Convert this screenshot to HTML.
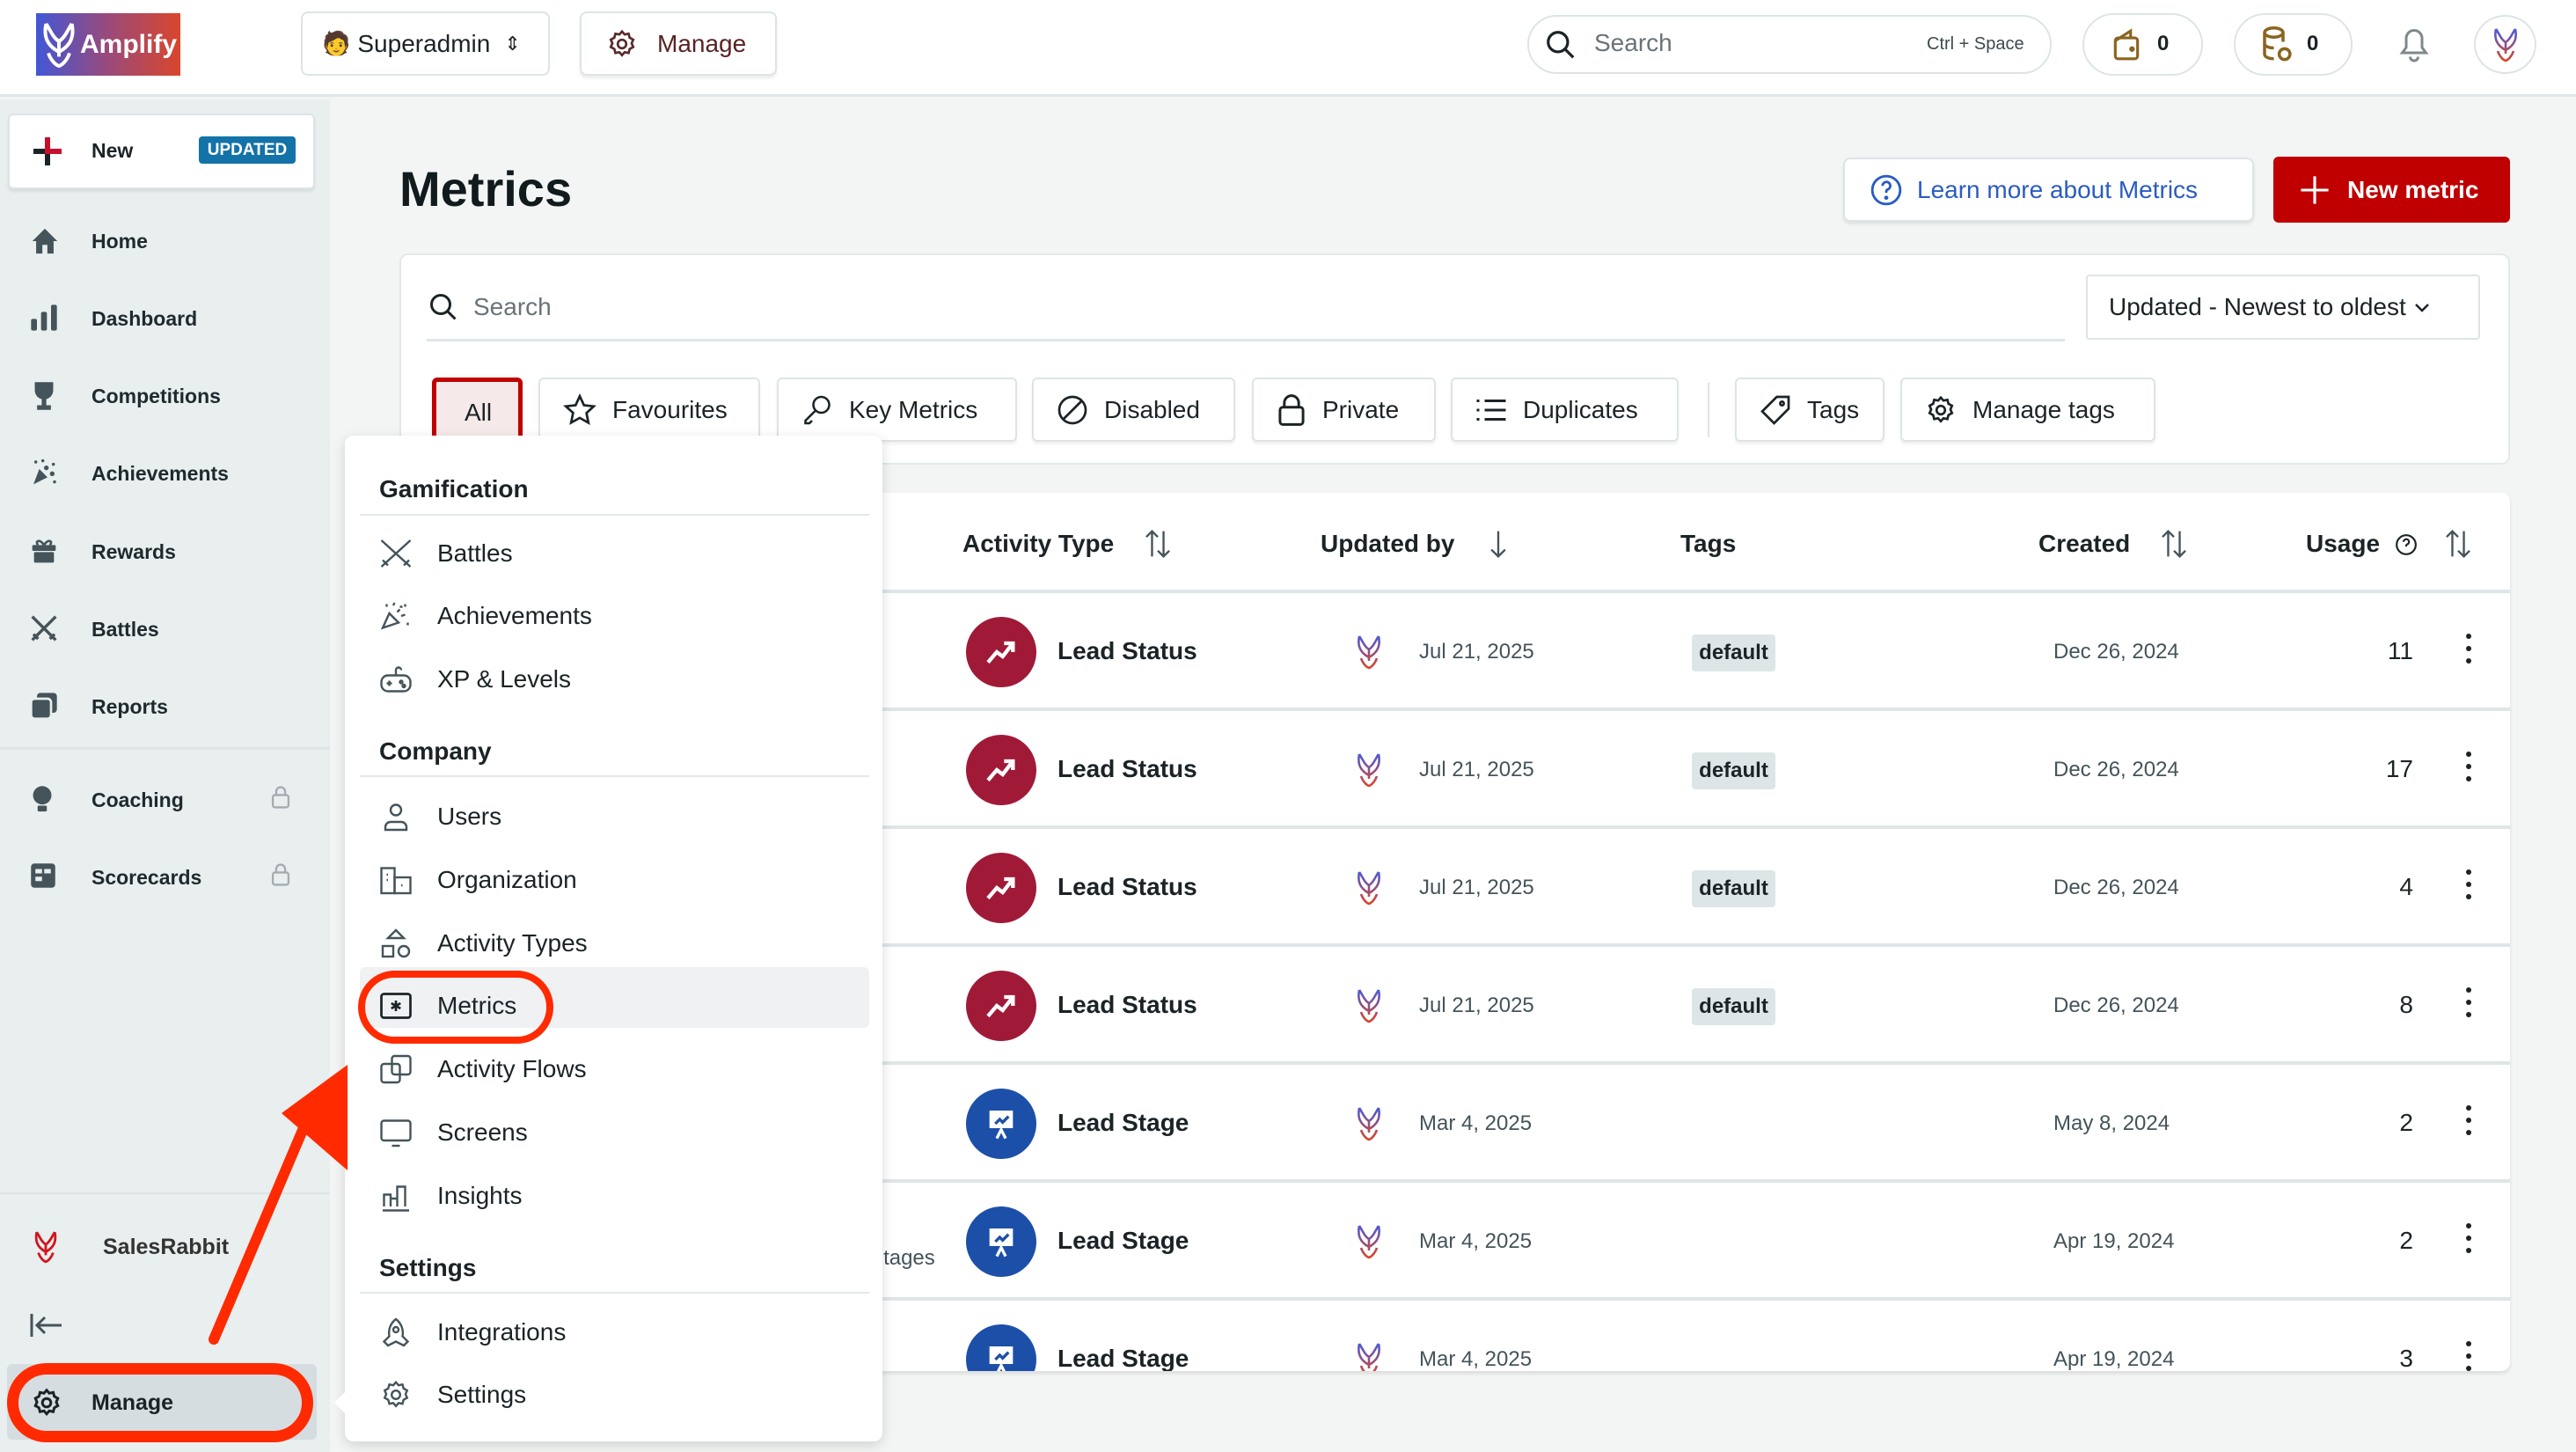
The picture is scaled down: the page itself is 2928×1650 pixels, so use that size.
<!DOCTYPE html>
<html><head><meta charset="utf-8"><style>
*{box-sizing:border-box;margin:0;padding:0}
body{width:2928px;height:1650px;overflow:hidden;background:#f3f5f4;font-family:"Liberation Sans",sans-serif;color:#1b2326;position:relative}
.a{position:absolute}
.btn{position:absolute;background:#fff;border:2px solid #dde4e6;border-radius:8px;box-shadow:0 3px 3px rgba(0,0,0,.08);display:flex;align-items:center;font-size:28px}
.nav{position:absolute;left:0;width:375px;height:60px;font-size:23px;font-weight:bold;color:#1f2a2e}
.nav svg{position:absolute;left:34px;top:13px}
.nav span{position:absolute;left:104px;top:17px}
.chip{position:absolute;top:429px;height:73px;background:#fff;border:2px solid #dde4e6;border-radius:6px;box-shadow:0 3px 3px rgba(0,0,0,.06);display:flex;align-items:center;font-size:28px;padding-left:26px;gap:18px}
.th{position:absolute;top:602px;font-size:28px;font-weight:bold;color:#1b2326}
.row{position:absolute;left:0;width:2399px;height:134px;border-top:4px solid #dfe6e7}
.ic{position:absolute;left:644px;top:27px;width:80px;height:80px;border-radius:50%;display:flex;align-items:center;justify-content:center}
.rt{position:absolute;top:50px;font-size:28px;white-space:nowrap}
.dt{position:absolute;top:53px;font-size:24px;color:#44545a;white-space:nowrap}
.tag{position:absolute;left:1469px;top:47px;width:95px;height:42px;background:#dde5e6;border-radius:4px;font-size:24px;font-weight:bold;display:flex;align-items:center;justify-content:center}
.num{position:absolute;top:50px;right:110px;font-size:28px}
.dots{position:absolute;left:2349px;top:46px}
.dots i{display:block;width:6px;height:6px;border-radius:50%;background:#1b2326;margin-bottom:8px}
.mi{position:absolute;left:0;width:611px;height:68px;font-size:28px;color:#1b2326}
.mi svg{position:absolute;left:40px;top:16px}
.mi span{position:absolute;left:105px;top:18px}
.mh{position:absolute;left:39px;font-size:28px;font-weight:bold}
.ml{position:absolute;left:17px;width:579px;height:2px;background:#e3e8e9}
</style></head><body>
<svg width="0" height="0" style="position:absolute"><defs><linearGradient id="g" x1="0" y1="0" x2="0" y2="1"><stop offset="0" stop-color="#4a5bd8"/><stop offset="1" stop-color="#d9462c"/></linearGradient><path id="rab" d="M4 2 C2 12 4 20 15 26 M26 2 C28 12 26 20 15 26 M4 2 C8 8 10 14 15 17 M26 2 C22 8 20 14 15 17 M15 17 V30 M6 27 C8 33 12 37 15 38 C18 37 22 33 24 27"/></defs></svg>

<div class="a" style="left:0;top:0;width:2928px;height:110px;background:#fff;border-bottom:3px solid #dfe6e7"></div>
<div class="a" style="left:41px;top:15px;width:164px;height:71px;background:linear-gradient(90deg,#4257d6,#9a4a7a,#d9462c);display:flex;align-items:center">
<svg width="40" height="56" viewBox="0 0 30 40" style="margin-left:6px"><use href="#rab" fill="none" stroke="#fff" stroke-width="3"/></svg>
<span style="color:#fff;font-weight:bold;font-size:30px;margin-left:4px">Amplify</span></div>
<div class="btn" style="left:342px;top:13px;width:283px;height:73px;box-shadow:none;padding-left:22px;gap:8px"><span style="font-size:26px">🧑</span><span>Superadmin</span><span style="font-size:22px;margin-left:8px">⇕</span></div>
<div class="btn" style="left:659px;top:13px;width:224px;height:73px;padding-left:28px;gap:22px;color:#5a2222"><svg width="36" height="36" viewBox="0 0 24 24" fill="none" stroke="#5a2a2a" stroke-width="1.8"><circle cx="12" cy="12" r="3.2"/><path d="M12 2.5l2 2.3 3-.6.8 3 2.7 1.5-1.2 2.8 1.2 2.8-2.7 1.5-.8 3-3-.6-2 2.3-2-2.3-3 .6-.8-3-2.7-1.5 1.2-2.8-1.2-2.8 2.7-1.5.8-3 3 .6z"/></svg><span>Manage</span></div>
<div class="a" style="left:1736px;top:17px;width:596px;height:67px;border:2px solid #dde4e6;border-radius:34px;background:#fff"></div>
<svg class="a" style="left:1755px;top:32px" width="38" height="38" viewBox="0 0 24 24" fill="none" stroke="#1b2326" stroke-width="2"><circle cx="10" cy="10" r="7"/><path d="M15 15l6 6"/></svg>
<div class="a" style="left:1812px;top:33px;font-size:28px;color:#6a7377">Search</div>
<div class="a" style="left:2190px;top:39px;font-size:20px;color:#3e4a4e">Ctrl + Space</div>
<div class="a" style="left:2367px;top:15px;width:137px;height:71px;border:2px solid #dde4e6;border-radius:36px;background:#fff"></div>
<svg class="a" style="left:2400px;top:32px" width="34" height="38" viewBox="0 0 20 24" fill="none" stroke="#8a6420" stroke-width="2"><rect x="2" y="7" width="16" height="15" rx="2"/><path d="M2 9 L13 2 V7"/><circle cx="14" cy="15" r="1" fill="#8a6420"/></svg>
<div class="a" style="left:2452px;top:36px;font-size:24px;font-weight:bold">0</div>
<div class="a" style="left:2539px;top:15px;width:135px;height:71px;border:2px solid #dde4e6;border-radius:36px;background:#fff"></div>
<svg class="a" style="left:2570px;top:30px" width="36" height="42" viewBox="0 0 20 24" fill="none" stroke="#8a6420" stroke-width="2"><ellipse cx="8" cy="4" rx="6" ry="3"/><path d="M2 4v14c0 2 3 3 6 3M14 4v6"/><path d="M2 11c0 2 3 3 6 3"/><circle cx="15" cy="18" r="3.5"/></svg>
<div class="a" style="left:2622px;top:36px;font-size:24px;font-weight:bold">0</div>
<svg class="a" style="left:2726px;top:30px" width="36" height="42" viewBox="0 0 24 28" fill="none" stroke="#7e898d" stroke-width="2"><path d="M12 3a6 6 0 0 1 6 6v7l3 4H3l3-4V9a6 6 0 0 1 6-6zM9 23a3 3 0 0 0 6 0"/></svg>
<div class="a" style="left:2812px;top:17px;width:71px;height:67px;border:2px solid #dde4e6;border-radius:50%;background:#fff"></div>
<svg class="a" style="left:2833px;top:31px" width="30" height="40" viewBox="0 0 30 40"><use href="#rab" fill="none" stroke="url(#g)" stroke-width="2.6"/></svg>

<div class="a" style="left:0;top:113px;width:375px;height:1537px;background:#e9eeee"></div>
<div class="btn" style="left:9px;top:129px;width:349px;height:86px;border-radius:6px"></div>
<div class="a" style="left:38px;top:156px;width:32px;height:32px"><div class="a" style="left:13px;top:0;width:6px;height:32px;background:#1b2326"></div><div class="a" style="left:13px;top:0;width:6px;height:16px;background:#c8102e"></div><div class="a" style="left:13px;top:13px;width:19px;height:6px;background:#c8102e"></div><div class="a" style="left:0;top:13px;width:13px;height:6px;background:#1b2326"></div></div>
<div class="a" style="left:104px;top:158px;font-size:23px;font-weight:bold">New</div>
<div class="a" style="left:226px;top:155px;width:110px;height:31px;background:#1372a8;border-radius:4px;color:#fff;font-size:19px;font-weight:bold;display:flex;align-items:center;justify-content:center">UPDATED</div>

<div class="nav" style="top:244px"><svg width="34" height="34" viewBox="0 0 24 24" fill="#44545a"><path d="M12 2 L22 12 H19 V22 H14 V15 H10 V22 H5 V12 H2z"/></svg><span>Home</span></div>
<div class="nav" style="top:332px"><svg width="32" height="32" viewBox="0 0 24 24" fill="#44545a"><rect x="1" y="13" width="5" height="10" rx="1.5"/><rect x="9.5" y="7" width="5" height="16" rx="1.5"/><rect x="18" y="1" width="5" height="22" rx="1.5"/></svg><span>Dashboard</span></div>
<div class="nav" style="top:420px"><svg width="32" height="34" viewBox="0 0 24 26" fill="#44545a"><path d="M4 1h16v7a8 8 0 0 1-6 7.7V21h4v4H6v-4h4v-5.3A8 8 0 0 1 4 8z"/></svg><span>Competitions</span></div>
<div class="nav" style="top:508px"><svg width="32" height="32" viewBox="0 0 24 24" fill="#44545a"><path d="M3 22 L8 9 L15 16z"/><circle cx="14" cy="8" r="2"/><circle cx="19" cy="13" r="2"/><circle cx="5" cy="3" r="1.3"/><circle cx="11" cy="2" r="1.3"/><circle cx="20" cy="5" r="1.3"/><circle cx="21" cy="20" r="1.3"/></svg><span>Achievements</span></div>
<div class="nav" style="top:597px"><svg width="32" height="32" viewBox="0 0 24 24" fill="#44545a"><rect x="2" y="7" width="20" height="5" rx="1"/><rect x="3.5" y="13" width="17" height="9" rx="1"/><path d="M12 7 C8 1 4 4 7 7 M12 7 C16 1 20 4 17 7" fill="none" stroke="#44545a" stroke-width="2"/></svg><span>Rewards</span></div>
<div class="nav" style="top:685px"><svg width="32" height="32" viewBox="0 0 24 24" fill="none" stroke="#44545a" stroke-width="2.6"><path d="M2 2 L22 22 M22 2 L2 22 M3 17l4 4M17 21l4-4"/></svg><span>Battles</span></div>
<div class="nav" style="top:773px"><svg width="32" height="32" viewBox="0 0 24 24" fill="#44545a"><rect x="6" y="1" width="17" height="17" rx="3"/><rect x="1" y="6" width="17" height="17" rx="3" stroke="#e9eeee" stroke-width="2"/></svg><span>Reports</span></div>
<div class="a" style="left:0;top:849px;width:375px;height:3px;background:#dde4e6"></div>
<div class="nav" style="top:879px"><svg width="28" height="34" viewBox="0 0 20 26" fill="#44545a"><circle cx="10" cy="9" r="8"/><rect x="6" y="18" width="8" height="5" rx="1"/></svg><span>Coaching</span><svg style="left:306px" width="26" height="28" viewBox="0 0 20 22" fill="none" stroke="#a3acb0" stroke-width="1.8"><rect x="3" y="9" width="14" height="11" rx="2"/><path d="M6 9V6a4 4 0 0 1 8 0v3"/></svg></div>
<div class="nav" style="top:967px"><svg width="30" height="30" viewBox="0 0 24 24" fill="#44545a"><rect x="1" y="1" width="22" height="22" rx="3"/><rect x="5" y="6" width="6" height="4" fill="#e9eeee"/><rect x="13" y="6" width="6" height="4" fill="#e9eeee"/><rect x="5" y="13" width="6" height="4" fill="#e9eeee"/></svg><span>Scorecards</span><svg style="left:306px" width="26" height="28" viewBox="0 0 20 22" fill="none" stroke="#a3acb0" stroke-width="1.8"><rect x="3" y="9" width="14" height="11" rx="2"/><path d="M6 9V6a4 4 0 0 1 8 0v3"/></svg></div>
<div class="a" style="left:0;top:1355px;width:375px;height:2px;background:#dde4e6"></div>
<svg class="a" style="left:38px;top:1398px" width="28" height="38" viewBox="0 0 30 40"><use href="#rab" fill="none" stroke="#d0161e" stroke-width="3"/></svg>
<div class="a" style="left:117px;top:1403px;font-size:25px;font-weight:bold;color:#333">SalesRabbit</div>
<svg class="a" style="left:34px;top:1492px" width="38" height="28" viewBox="0 0 38 28" fill="none" stroke="#44545a" stroke-width="3"><path d="M2 1v26M36 14H9M17 5l-9 9 9 9"/></svg>
<div class="a" style="left:8px;top:1550px;width:352px;height:86px;background:#d6dde0;border-radius:6px"></div>
<svg class="a" style="left:35px;top:1576px" width="36" height="36" viewBox="0 0 24 24" fill="none" stroke="#1b2326" stroke-width="2"><circle cx="12" cy="12" r="3.2"/><path d="M12 2.5l2 2.3 3-.6.8 3 2.7 1.5-1.2 2.8 1.2 2.8-2.7 1.5-.8 3-3-.6-2 2.3-2-2.3-3 .6-.8-3-2.7-1.5 1.2-2.8-1.2-2.8 2.7-1.5.8-3 3 .6z"/></svg>
<div class="a" style="left:104px;top:1580px;font-size:25px;font-weight:bold">Manage</div>
<div class="a" style="left:8px;top:1549px;width:348px;height:90px;border:13px solid #ff2a00;border-radius:45px"></div>

<div class="a" style="left:454px;top:182px;font-size:56px;font-weight:bold;color:#111a1d">Metrics</div>
<div class="btn" style="left:2095px;top:179px;width:467px;height:73px;padding-left:28px;gap:16px;color:#2a5cc0"><svg width="38" height="38" viewBox="0 0 24 24" fill="none" stroke="#2a5cc0" stroke-width="1.8"><circle cx="12" cy="12" r="10"/><path d="M9.3 9a2.8 2.8 0 1 1 3.7 2.6c-.7.3-1 .9-1 1.6V14"/><circle cx="12" cy="17.5" r=".6" fill="#2a5cc0"/></svg><span>Learn more about Metrics</span></div>
<div class="a" style="left:2584px;top:178px;width:269px;height:75px;background:#c00000;border-radius:6px;display:flex;align-items:center;padding-left:30px;gap:20px;color:#fff;font-size:28px;font-weight:bold"><svg width="34" height="34" viewBox="0 0 24 24" stroke="#fff" stroke-width="2.2"><path d="M12 1v22M1 12h22"/></svg><span>New metric</span></div>

<div class="a" style="left:454px;top:288px;width:2399px;height:240px;background:#fff;border-radius:10px;border:2px solid #e3e8e9"></div>
<svg class="a" style="left:486px;top:331px" width="36" height="36" viewBox="0 0 24 24" fill="none" stroke="#1b2326" stroke-width="2"><circle cx="10" cy="10" r="7"/><path d="M15 15l6 6"/></svg>
<div class="a" style="left:538px;top:333px;font-size:28px;color:#6a7377">Search</div>
<div class="a" style="left:485px;top:385px;width:1862px;height:3px;background:#dfe6e7"></div>
<div class="a" style="left:2371px;top:312px;width:448px;height:74px;border:2px solid #dde4e6;border-radius:4px;display:flex;align-items:center;padding-left:24px;font-size:28px">Updated - Newest to oldest&nbsp;<svg width="20" height="14" viewBox="0 0 20 14" fill="none" stroke="#1b2326" stroke-width="2.5"><path d="M3 4l7 7 7-7"/></svg></div>
<div class="chip" style="left:491px;width:103px;border:5px solid #c00000;background:#f6e9e9;padding-left:32px;height:80px">All</div>
<div class="chip" style="left:612px;width:252px"><svg width="38" height="38" viewBox="0 0 24 24" fill="none" stroke="#1b2326" stroke-width="1.7"><path d="M12 2l3 6.5 7 .8-5.2 4.8 1.4 7L12 17.6 5.8 21l1.4-7L2 9.3l7-.8z"/></svg>Favourites</div>
<div class="chip" style="left:883px;width:273px"><svg width="36" height="36" viewBox="0 0 24 24" fill="none" stroke="#1b2326" stroke-width="1.7"><circle cx="15" cy="8" r="6"/><path d="M11 12 L3 20 V22 H6 L8 20"/></svg>Key Metrics</div>
<div class="chip" style="left:1173px;width:231px"><svg width="36" height="36" viewBox="0 0 24 24" fill="none" stroke="#1b2326" stroke-width="1.8"><circle cx="12" cy="12" r="10"/><path d="M5 19L19 5"/></svg>Disabled</div>
<div class="chip" style="left:1423px;width:209px"><svg width="34" height="36" viewBox="0 0 20 22" fill="none" stroke="#1b2326" stroke-width="1.8"><rect x="2" y="9" width="16" height="12" rx="2"/><path d="M5 9V6a5 5 0 0 1 10 0v3"/></svg>Private</div>
<div class="chip" style="left:1649px;width:259px"><svg width="36" height="30" viewBox="0 0 24 20" fill="none" stroke="#1b2326" stroke-width="2"><path d="M7 3h16M7 10h16M7 17h16M1 3h2M1 10h2M1 17h2"/></svg>Duplicates</div>
<div class="a" style="left:1941px;top:435px;width:2px;height:62px;background:#dde4e6"></div>
<div class="chip" style="left:1972px;width:170px"><svg width="36" height="36" viewBox="0 0 24 24" fill="none" stroke="#1b2326" stroke-width="1.8"><path d="M13 2h9v9L11 22 2 13z"/><circle cx="17" cy="7" r="1.4"/></svg>Tags</div>
<div class="chip" style="left:2160px;width:290px"><svg width="36" height="36" viewBox="0 0 24 24" fill="none" stroke="#1b2326" stroke-width="1.8"><circle cx="12" cy="12" r="3.2"/><path d="M12 2.5l2 2.3 3-.6.8 3 2.7 1.5-1.2 2.8 1.2 2.8-2.7 1.5-.8 3-3-.6-2 2.3-2-2.3-3 .6-.8-3-2.7-1.5 1.2-2.8-1.2-2.8 2.7-1.5.8-3 3 .6z"/></svg>Manage tags</div>

<div class="a" style="left:454px;top:560px;width:2399px;height:998px;background:#fff;border-radius:10px;box-shadow:0 3px 5px rgba(0,0,0,.1);overflow:hidden">
<div style="position:absolute;left:-454px;top:-560px;width:2928px;height:1650px">
<div class="th" style="left:1094px">Activity Type</div>
<svg class="a" style="left:1300px;top:601px" width="32" height="34" viewBox="0 0 24 26" fill="none" stroke="#44545a" stroke-width="1.8"><path d="M7 24V2M2 7l5-5 5 5M17 2v22M12 19l5 5 5-5"/></svg>
<div class="th" style="left:1501px">Updated by</div>
<svg class="a" style="left:1690px;top:601px" width="26" height="34" viewBox="0 0 18 26" fill="none" stroke="#44545a" stroke-width="1.8"><path d="M9 2v22M3 18l6 6 6-6"/></svg>
<div class="th" style="left:1910px">Tags</div>
<div class="th" style="left:2317px">Created</div>
<svg class="a" style="left:2455px;top:601px" width="32" height="34" viewBox="0 0 24 26" fill="none" stroke="#44545a" stroke-width="1.8"><path d="M7 24V2M2 7l5-5 5 5M17 2v22M12 19l5 5 5-5"/></svg>
<div class="th" style="left:2621px">Usage</div>
<svg class="a" style="left:2722px;top:606px" width="26" height="26" viewBox="0 0 24 24" fill="none" stroke="#1b2326" stroke-width="2"><circle cx="12" cy="12" r="10"/><path d="M9.3 9a2.8 2.8 0 1 1 3.7 2.6c-.7.3-1 .9-1 1.6V14"/></svg>
<svg class="a" style="left:2778px;top:601px" width="32" height="34" viewBox="0 0 24 26" fill="none" stroke="#44545a" stroke-width="1.8"><path d="M7 24V2M2 7l5-5 5 5M17 2v22M12 19l5 5 5-5"/></svg>
</div>

<div class="row" style="top:110px"><div class="ic" style="background:#a01a38"><svg width="40" height="40" viewBox="0 0 24 24" fill="none" stroke="#fff" stroke-width="2.6"><path d="M3 19l6-7 4 3 7-9M14 6h6v6"/></svg></div><div class="rt" style="left:748px;font-weight:bold">Lead Status</div><svg class="a" style="left:1087px;top:46px" width="30" height="42" viewBox="0 0 30 40"><use href="#rab" fill="none" stroke="url(#g)" stroke-width="2.6"/></svg><div class="dt" style="left:1159px">Jul 21, 2025</div><div class="tag">default</div><div class="dt" style="left:1880px">Dec 26, 2024</div><div class="num">11</div><div class="dots"><i></i><i></i><i></i></div></div>
<div class="row" style="top:244px"><div class="ic" style="background:#a01a38"><svg width="40" height="40" viewBox="0 0 24 24" fill="none" stroke="#fff" stroke-width="2.6"><path d="M3 19l6-7 4 3 7-9M14 6h6v6"/></svg></div><div class="rt" style="left:748px;font-weight:bold">Lead Status</div><svg class="a" style="left:1087px;top:46px" width="30" height="42" viewBox="0 0 30 40"><use href="#rab" fill="none" stroke="url(#g)" stroke-width="2.6"/></svg><div class="dt" style="left:1159px">Jul 21, 2025</div><div class="tag">default</div><div class="dt" style="left:1880px">Dec 26, 2024</div><div class="num">17</div><div class="dots"><i></i><i></i><i></i></div></div>
<div class="row" style="top:378px"><div class="ic" style="background:#a01a38"><svg width="40" height="40" viewBox="0 0 24 24" fill="none" stroke="#fff" stroke-width="2.6"><path d="M3 19l6-7 4 3 7-9M14 6h6v6"/></svg></div><div class="rt" style="left:748px;font-weight:bold">Lead Status</div><svg class="a" style="left:1087px;top:46px" width="30" height="42" viewBox="0 0 30 40"><use href="#rab" fill="none" stroke="url(#g)" stroke-width="2.6"/></svg><div class="dt" style="left:1159px">Jul 21, 2025</div><div class="tag">default</div><div class="dt" style="left:1880px">Dec 26, 2024</div><div class="num">4</div><div class="dots"><i></i><i></i><i></i></div></div>
<div class="row" style="top:512px"><div class="ic" style="background:#a01a38"><svg width="40" height="40" viewBox="0 0 24 24" fill="none" stroke="#fff" stroke-width="2.6"><path d="M3 19l6-7 4 3 7-9M14 6h6v6"/></svg></div><div class="rt" style="left:748px;font-weight:bold">Lead Status</div><svg class="a" style="left:1087px;top:46px" width="30" height="42" viewBox="0 0 30 40"><use href="#rab" fill="none" stroke="url(#g)" stroke-width="2.6"/></svg><div class="dt" style="left:1159px">Jul 21, 2025</div><div class="tag">default</div><div class="dt" style="left:1880px">Dec 26, 2024</div><div class="num">8</div><div class="dots"><i></i><i></i><i></i></div></div>
<div class="row" style="top:646px"><div class="ic" style="background:#1c4fa8"><svg width="36" height="40" viewBox="0 0 20 24" fill="#fff"><path d="M2 3h16v12H2z"/><path d="M6 12l3-3 2 2 4-4" stroke="#1c4fa8" stroke-width="2" fill="none"/><path d="M7 22l3-6 3 6" stroke="#fff" stroke-width="2" fill="none"/></svg></div><div class="rt" style="left:748px;font-weight:bold">Lead Stage</div><svg class="a" style="left:1087px;top:46px" width="30" height="42" viewBox="0 0 30 40"><use href="#rab" fill="none" stroke="url(#g)" stroke-width="2.6"/></svg><div class="dt" style="left:1159px">Mar 4, 2025</div><div class="dt" style="left:1880px">May 8, 2024</div><div class="num">2</div><div class="dots"><i></i><i></i><i></i></div></div>
<div class="row" style="top:780px"><div class="ic" style="background:#1c4fa8"><svg width="36" height="40" viewBox="0 0 20 24" fill="#fff"><path d="M2 3h16v12H2z"/><path d="M6 12l3-3 2 2 4-4" stroke="#1c4fa8" stroke-width="2" fill="none"/><path d="M7 22l3-6 3 6" stroke="#fff" stroke-width="2" fill="none"/></svg></div><div class="rt" style="left:474px;top:72px;font-size:24px;color:#44545a">Lead Stages</div><div class="rt" style="left:748px;font-weight:bold">Lead Stage</div><svg class="a" style="left:1087px;top:46px" width="30" height="42" viewBox="0 0 30 40"><use href="#rab" fill="none" stroke="url(#g)" stroke-width="2.6"/></svg><div class="dt" style="left:1159px">Mar 4, 2025</div><div class="dt" style="left:1880px">Apr 19, 2024</div><div class="num">2</div><div class="dots"><i></i><i></i><i></i></div></div>
<div class="row" style="top:914px"><div class="ic" style="background:#1c4fa8"><svg width="36" height="40" viewBox="0 0 20 24" fill="#fff"><path d="M2 3h16v12H2z"/><path d="M6 12l3-3 2 2 4-4" stroke="#1c4fa8" stroke-width="2" fill="none"/><path d="M7 22l3-6 3 6" stroke="#fff" stroke-width="2" fill="none"/></svg></div><div class="rt" style="left:748px;font-weight:bold">Lead Stage</div><svg class="a" style="left:1087px;top:46px" width="30" height="42" viewBox="0 0 30 40"><use href="#rab" fill="none" stroke="url(#g)" stroke-width="2.6"/></svg><div class="dt" style="left:1159px">Mar 4, 2025</div><div class="dt" style="left:1880px">Apr 19, 2024</div><div class="num">3</div><div class="dots"><i></i><i></i><i></i></div></div>
</div>

<div class="a" style="left:392px;top:495px;width:611px;height:1143px;background:#fff;border-radius:10px;box-shadow:0 4px 14px rgba(0,0,0,.15)">
<div class="a" style="left:-12px;top:1087px;width:0;height:0;border-top:12px solid transparent;border-bottom:12px solid transparent;border-right:12px solid #fff"></div>
<div class="mh" style="top:45px">Gamification</div><div class="ml" style="top:89px"></div>
<div class="mi" style="top:100px"><svg width="36" height="36" viewBox="0 0 24 24" fill="none" stroke="#44545a" stroke-width="1.6"><path d="M1 2l22 20M23 2L1 22M2 17l4 4M18 21l4-4"/></svg><span>Battles</span></div>
<div class="mi" style="top:171px"><svg width="36" height="36" viewBox="0 0 24 24" fill="none" stroke="#44545a" stroke-width="1.6"><path d="M2 21l5-11 7 7z"/><path d="M13 9l2-2M16 12l3-1M5 3v2M11 2l-1 2M19 3v2M21 17v2M15 5h2"/></svg><span>Achievements</span></div>
<div class="mi" style="top:243px"><svg width="36" height="36" viewBox="0 0 24 24" fill="none" stroke="#44545a" stroke-width="1.6"><rect x="1" y="9" width="22" height="12" rx="5"/><path d="M12 9V5a2 2 0 0 1 4 0M5 15h4M7 13v4"/><circle cx="16" cy="14" r="1"/><circle cx="18" cy="17" r="1"/></svg><span>XP &amp; Levels</span></div>
<div class="mh" style="top:343px">Company</div><div class="ml" style="top:386px"></div>
<div class="mi" style="top:399px"><svg width="36" height="36" viewBox="0 0 24 24" fill="none" stroke="#44545a" stroke-width="1.6"><circle cx="12" cy="7" r="4"/><path d="M4 22v-2a4 4 0 0 1 4-4h8a4 4 0 0 1 4 4v2z"/></svg><span>Users</span></div>
<div class="mi" style="top:471px"><svg width="36" height="36" viewBox="0 0 24 24" fill="none" stroke="#44545a" stroke-width="1.6"><rect x="1" y="3" width="10" height="19"/><rect x="11" y="10" width="12" height="12"/><path d="M5 8h1M5 12h1M16 16h1"/></svg><span>Organization</span></div>
<div class="mi" style="top:543px"><svg width="36" height="36" viewBox="0 0 24 24" fill="none" stroke="#44545a" stroke-width="1.6"><path d="M12 2l6 6H6z"/><rect x="2" y="14" width="8" height="8"/><circle cx="18" cy="18" r="4"/></svg><span>Activity Types</span></div>
<div class="a" style="left:17px;top:604px;width:579px;height:69px;background:#eff1f2;border-radius:6px"></div>
<div class="mi" style="top:614px"><svg width="36" height="36" viewBox="0 0 24 24" fill="none" stroke="#1b2326" stroke-width="1.8"><rect x="1" y="3" width="22" height="18" rx="2"/><path d="M12 8v8M8.5 10l7 4M15.5 10l-7 4"/></svg><span>Metrics</span></div>
<div class="mi" style="top:686px"><svg width="36" height="36" viewBox="0 0 24 24" fill="none" stroke="#44545a" stroke-width="1.6"><rect x="1" y="8" width="14" height="14" rx="2"/><rect x="9" y="2" width="14" height="14" rx="2"/></svg><span>Activity Flows</span></div>
<div class="mi" style="top:758px"><svg width="36" height="36" viewBox="0 0 24 24" fill="none" stroke="#44545a" stroke-width="1.6"><rect x="1" y="3" width="22" height="15" rx="2"/><path d="M9 22h6"/></svg><span>Screens</span></div>
<div class="mi" style="top:830px"><svg width="36" height="36" viewBox="0 0 24 24" fill="none" stroke="#44545a" stroke-width="1.6"><path d="M3 20V11h5v9M8 20V14h5v6M13 20V5h6v15M2 23h20"/></svg><span>Insights</span></div>
<div class="mh" style="top:930px">Settings</div><div class="ml" style="top:973px"></div>
<div class="mi" style="top:985px"><svg width="36" height="36" viewBox="0 0 24 24" fill="none" stroke="#44545a" stroke-width="1.6"><path d="M12 2c4 3 6 8 5 13l4 4-3 3-6-3-6 3-3-3 4-4C6 10 8 5 12 2z"/><circle cx="12" cy="10" r="2"/></svg><span>Integrations</span></div>
<div class="mi" style="top:1056px"><svg width="36" height="36" viewBox="0 0 24 24" fill="none" stroke="#44545a" stroke-width="1.6"><circle cx="12" cy="12" r="3.2"/><path d="M12 2.5l2 2.3 3-.6.8 3 2.7 1.5-1.2 2.8 1.2 2.8-2.7 1.5-.8 3-3-.6-2 2.3-2-2.3-3 .6-.8-3-2.7-1.5 1.2-2.8-1.2-2.8 2.7-1.5.8-3 3 .6z"/></svg><span>Settings</span></div>
</div>

<div class="a" style="left:407px;top:1103px;width:222px;height:83px;border:8px solid #ff2a00;border-radius:42px"></div>
<svg class="a" style="left:0;top:0" width="2928" height="1650" viewBox="0 0 2928 1650"><path d="M243 1522 L350 1270" stroke="#ff2a00" stroke-width="12" stroke-linecap="round"/><path d="M395 1210 L395 1330 L320 1265 Z" fill="#ff2a00"/></svg>
</body></html>
